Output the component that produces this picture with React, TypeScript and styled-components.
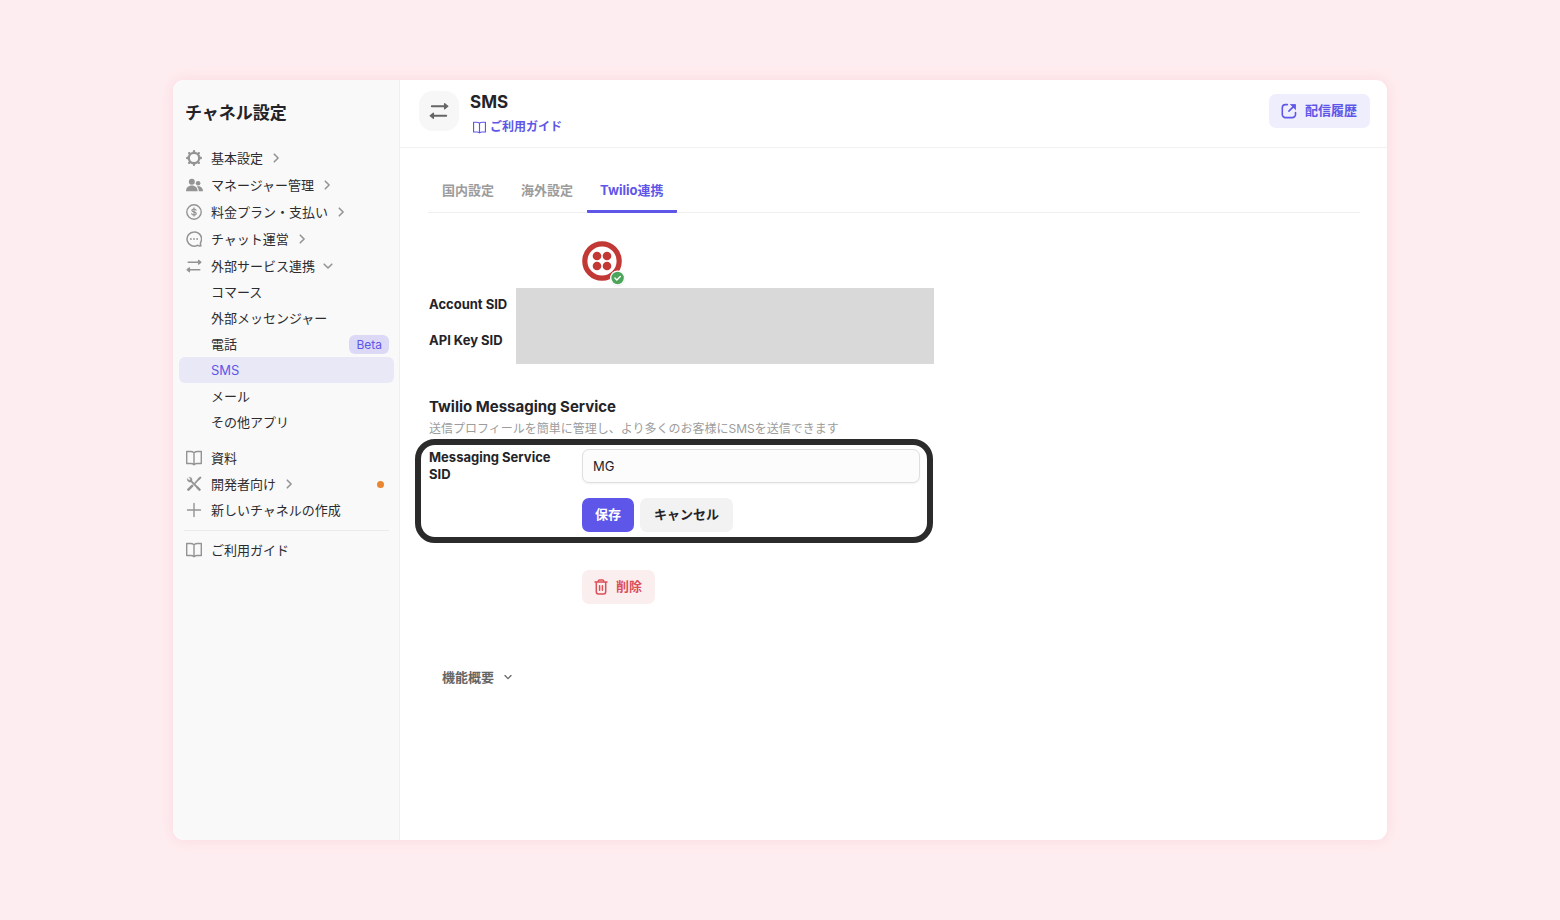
import React from "react";
import styled, { createGlobalStyle } from "styled-components";

const GlobalStyle = createGlobalStyle`
  *, *::before, *::after { box-sizing: border-box; }
  body {
    margin: 0;
    background: #feedf0;
    color: #242428;
    font-family: Inter, "Noto Sans CJK JP", sans-serif;
    font-size: 13px;
    line-height: 17px;
  }
  h1, h2, p, ul { margin: 0; padding: 0; }
  ul { list-style: none; }
  button, input { font: inherit; color: inherit; }
  a { color: inherit; text-decoration: none; }
  svg { display: block; flex: none; }
`;

/* ---------- icons ---------- */

const GearIcon = () => (
  <svg width="16" height="16" viewBox="0 0 16 16" fill="none" stroke="currentColor">
    <circle cx="8" cy="8" r="5.2" strokeWidth="2.3" />
    {[0, 45, 90, 135, 180, 225, 270, 315].map((a) => (
      <path key={a} d="M8 2V1.2" strokeWidth="2.4" strokeLinecap="round" transform={`rotate(${a} 8 8)`} />
    ))}
  </svg>
);

const PeopleIcon = () => (
  <svg width="17" height="16" viewBox="0 0 17 16" fill="currentColor">
    <circle cx="5.8" cy="4.8" r="3" />
    <circle cx="12.1" cy="6.3" r="2.3" />
    <path d="M0 14.3C0 10.8 2.4 8.600 5.800 8.600s5.800 2.200 5.800 5.700z" />
    <path d="M10.900 9.500c3.400-.8 6.100 1.400 6.100 4.800h-4.200c0-2-.7-3.600-1.900-4.800z" />
  </svg>
);

const CoinIcon = () => (
  <svg width="16" height="16" viewBox="0 0 16 16" fill="none" stroke="currentColor" strokeWidth="1.4" strokeLinecap="round">
    <circle cx="8" cy="8" r="7.200" />
    <path d="M10.100 6.200C9.800 5.400 9 5 8 5c-1.200 0-2.100.6-2.100 1.500C5.900 8.600 10.200 7.300 10.200 9.500c0 .9-.9 1.500-2.200 1.500-1.100 0-2-.5-2.300-1.300M8 3.900v8.200" strokeWidth="1.200" />
  </svg>
);

const ChatIcon = () => (
  <svg width="16" height="16" viewBox="0 0 16 16" fill="none" stroke="currentColor" strokeWidth="1.500">
    <path d="M8 .9a7.100 7.100 0 1 0 3.400 13.400c1.100.5 2.300.7 3.500.5-.5-1-.6-2.200-.3-3.300A7.100 7.100 0 0 0 8 .9z" strokeLinejoin="round" />
    <g fill="currentColor" stroke="none">
      <circle cx="4.900" cy="8" r="0.9" />
      <circle cx="8" cy="8" r="0.9" />
      <circle cx="11.100" cy="8" r="0.9" />
    </g>
  </svg>
);

const SwapIcon = ({ size = 16 }: { size?: number }) => (
  <svg width={size} height={size} viewBox="0 0 16 16" fill="none" stroke="currentColor" strokeWidth="1.500" strokeLinecap="round" strokeLinejoin="round">
    <path d="M2.200 4.200h10M13.800 11.800h-10" />
    <path d="M12.500 2.200l2.500 2-2.500 2zM3.500 9.800l-2.500 2 2.500 2z" fill="currentColor" strokeWidth="1.100" />
  </svg>
);

const BookIcon = ({ size = 16 }: { size?: number }) => (
  <svg width={size} height={size} viewBox="0 0 16 16" fill="none" stroke="currentColor" strokeWidth="1.400" strokeLinejoin="round">
    <path d="M8 2.700C7 1.900 6 1.500 4.700 1.500H.7v12h4.200c1.300 0 2.200.4 3.100 1.200.9-.8 1.800-1.200 3.100-1.200h4.200v-12h-4C10 1.500 9 1.900 8 2.700zM8 2.700v12" />
  </svg>
);

const ToolsIcon = () => (
  <svg width="16" height="16" viewBox="0 0 16 16" fill="none" stroke="currentColor" strokeLinecap="round">
    <path d="M4.400 4.400l9 9.100" strokeWidth="1.800" />
    <path d="M1.400 2.600l1.700 1.700 1.300-.1.100-1.300L2.800 1.300c1.600-.5 3.200.5 3.300 2.100.1.900-.1 1.500-.7 2.100s-1.300.8-2.100.6C1.800 5.900.900 4.300 1.400 2.600z" fill="currentColor" strokeWidth=".3" />
    <path d="M9 7.200l3.700-4.100" strokeWidth="1.600" />
    <path d="M12.600 3.300l1.800-1.700" strokeWidth="2" />
    <path d="M2.400 13.700l3.800-3.800" strokeWidth="2.600" />
    <path d="M11.200 11.200l2.400 2.500" strokeWidth="2.300" />
  </svg>
);

const PlusIcon = () => (
  <svg width="16" height="16" viewBox="0 0 16 16" fill="none" stroke="currentColor" strokeWidth="1.400" strokeLinecap="round">
    <path d="M8 1.500v13M1.500 8h13" />
  </svg>
);

const Chevron = ({ down = false, size = 10 }: { down?: boolean; size?: number }) => (
  <svg width={size} height={size} viewBox="0 0 10 10" fill="none" stroke="currentColor" strokeWidth="1.600" strokeLinecap="round" strokeLinejoin="round">
    <path d={down ? "M1.200 3.200L5 7l3.800-3.800" : "M3.300 1.200L7.100 5 3.300 8.800"} />
  </svg>
);

const OpenIcon = () => (
  <svg width="16" height="16" viewBox="0 0 16 16" fill="none" stroke="currentColor" strokeWidth="1.600" strokeLinecap="round" strokeLinejoin="round">
    <path d="M6.400 1.600H4.500A3.200 3.200 0 0 0 1.300 4.800v6.600a3.200 3.200 0 0 0 3.200 3.200h6.800a3.200 3.200 0 0 0 3.200-3.200V9.600M7.900 8.100l5-5" />
    <path d="M9.800 1.500h4.700v4.700z" fill="currentColor" strokeWidth=".8" />
  </svg>
);

const TrashIcon = () => (
  <svg width="14" height="16" viewBox="0 0 14 16" fill="none" stroke="currentColor" strokeWidth="1.500" strokeLinecap="round" strokeLinejoin="round">
    <path d="M1 3.100h12M4.300 3V1.900c0-.6.400-1 1-1h3.400c.6 0 1 .4 1 1V3M2.300 3.300v9.500c0 1.300.8 2.100 2.100 2.100h5.200c1.300 0 2.100-.8 2.100-2.100V3.300M5.600 6.700v4.600M8.400 6.700v4.600" />
  </svg>
);

const TwilioLogo = () => (
  <svg width="44" height="46" viewBox="0 0 44 46" role="img" aria-label="Twilio">
    <circle cx="20" cy="20" r="17.200" fill="#fff" stroke="#c13834" strokeWidth="5.200" />
    <g fill="#c13834">
      <circle cx="15" cy="15" r="4.300" />
      <circle cx="25" cy="15" r="4.300" />
      <circle cx="15" cy="25" r="4.300" />
      <circle cx="25" cy="25" r="4.300" />
    </g>
    <circle cx="35.600" cy="37.500" r="7.700" fill="#e9e9e9" />
    <circle cx="35.600" cy="37" r="7.500" fill="#fff" />
    <circle cx="35.600" cy="37" r="6.200" fill="#4ca55a" />
    <path d="M32.900 37.100l1.900 1.900 3.500-3.600" fill="none" stroke="#fff" strokeWidth="1.400" strokeLinecap="round" strokeLinejoin="round" />
  </svg>
);

/* ---------- frame ---------- */

const Page = styled.div`
  display: flex;
  min-height: 100vh;
  padding: 80px 173px;
`;

const Card = styled.div`
  display: flex;
  flex: 1;
  min-width: 0;
  overflow: hidden;
  background: #fff;
  border-radius: 11px;
  box-shadow: 0 0 14px rgba(235, 110, 125, 0.16);
`;

/* ---------- sidebar ---------- */

const Sidebar = styled.aside`
  flex: none;
  width: 227px;
  padding: 23px 5px 22px 6px;
  background: #f9f9f9;
  border-right: 1px solid #efeff0;
`;

const SidebarTitle = styled.h2`
  padding-left: 6px;
  margin-bottom: 22px;
  font-size: 17px;
  line-height: 20px;
  font-weight: 700;
`;

const NavList = styled.ul<{ $gap?: number }>`
  display: flex;
  flex-direction: column;
  gap: ${(p) => p.$gap ?? 0}px;
`;

const NavSection = styled.div`
  margin-top: 10px;
`;

const Divider = styled.hr`
  height: 1px;
  margin: 7px 5px 6px;
  border: 0;
  background: #ebebec;
`;

const NavLink = styled.a<{ $active?: boolean; $nested?: boolean }>`
  display: flex;
  align-items: center;
  gap: 8px;
  height: 26px;
  padding: 0 5px 0 ${(p) => (p.$nested ? 32 : 7)}px;
  border-radius: 6px;
  background: ${(p) => (p.$active ? "#e9e8f7" : "transparent")};
  color: ${(p) => (p.$active ? "#5e56e8" : "#2c2c30")};
`;

const Muted = styled.span`
  display: flex;
  color: #949494;
`;

const ItemIcon = styled(Muted)`
  width: 17px;
`;

const Beta = styled.span`
  margin-left: auto;
  padding: 0 7px;
  border-radius: 6px;
  background: #dcd9f6;
  color: #5e56e8;
  font-size: 12px;
  line-height: 19px;
`;

const Dot = styled.span`
  width: 7px;
  height: 7px;
  margin: 0 5px 0 auto;
  border-radius: 50%;
  background: #e9862f;
`;

type Item = { label: string; icon: React.ReactNode; arrow?: "right" | "down"; dot?: boolean };

const mainItems: Item[] = [
  { label: "基本設定", icon: <GearIcon />, arrow: "right" },
  { label: "マネージャー管理", icon: <PeopleIcon />, arrow: "right" },
  { label: "料金プラン・支払い", icon: <CoinIcon />, arrow: "right" },
  { label: "チャット運営", icon: <ChatIcon />, arrow: "right" },
  { label: "外部サービス連携", icon: <SwapIcon />, arrow: "down" },
];

const subItems = ["コマース", "外部メッセンジャー", "電話", "SMS", "メール", "その他アプリ"];

const moreItems: Item[] = [
  { label: "資料", icon: <BookIcon /> },
  { label: "開発者向け", icon: <ToolsIcon />, arrow: "right", dot: true },
  { label: "新しいチャネルの作成", icon: <PlusIcon /> },
];

const NavItem = ({ label, icon, arrow, dot }: Item) => (
  <li>
    <NavLink href="#">
      <ItemIcon>{icon}</ItemIcon>
      {label}
      {arrow && (
        <Muted>
          <Chevron down={arrow === "down"} />
        </Muted>
      )}
      {dot && <Dot />}
    </NavLink>
  </li>
);

/* ---------- main ---------- */

const Main = styled.main`
  flex: 1;
  min-width: 0;
`;

const Header = styled.header`
  display: flex;
  gap: 11px;
  padding: 11px 17px 10px 19px;
  border-bottom: 1px solid #f1f1f1;
`;

const ChannelIcon = styled.div`
  display: grid;
  place-items: center;
  width: 40px;
  height: 40px;
  border-radius: 14px;
  background: #f7f7f7;
  color: #666;
`;

const HeaderText = styled.div`
  flex: 1;
  padding-top: 1px;
`;

const HeaderActions = styled.div`
  padding-top: 3px;
`;

const Title = styled.h1`
  margin-bottom: 5px;
  font-size: 17px;
  line-height: 20px;
  font-weight: 700;
`;

const GuideLink = styled.a`
  display: inline-flex;
  align-items: center;
  gap: 4px;
  padding-left: 3px;
  color: #5e56e8;
  font-size: 12px;
  line-height: 20px;
  font-weight: 700;
  vertical-align: top;
`;

const tones = {
  primary: ["#5e56e8", "#fff"],
  neutral: ["#f2f2f2", "#242428"],
  soft: ["#efeefd", "#5e56e8"],
  danger: ["#fbeeef", "#dc4f58"],
};

const Button = styled.button<{ $tone: keyof typeof tones }>`
  display: inline-flex;
  align-items: center;
  gap: 8px;
  height: 34px;
  padding: 0 13px 2px;
  border: 0;
  border-radius: 7px;
  background: ${(p) => tones[p.$tone][0]};
  color: ${(p) => tones[p.$tone][1]};
  font-weight: 700;
  vertical-align: top;
  cursor: pointer;
`;

const CancelButton = styled(Button)`
  padding: 0 14px 2px;
`;

const IconButton = styled(Button)`
  padding: 0 13px 1px 12px;
`;

const Tabs = styled.div`
  display: flex;
  gap: 1px;
  margin: 22px 27px 0 28px;
  padding-left: 1px;
  border-bottom: 1px solid #efeff0;
`;

const Tab = styled.button<{ $active?: boolean }>`
  height: 43px;
  margin-bottom: -1px;
  padding: 0 13px;
  border: 0;
  border-bottom: 3px solid ${(p) => (p.$active ? "#5e56e8" : "transparent")};
  border-radius: 1px;
  background: none;
  color: ${(p) => (p.$active ? "#5e56e8" : "#9c9c9c")};
  font-weight: 700;
`;

const Content = styled.div`
  padding: 28px 27px 28px 29px;
`;

const Indented = styled.div`
  padding-left: 153px;
`;

const Credentials = styled.div`
  display: flex;
  width: 505px;
  max-width: 100%;
  margin-top: 1px;
`;

const KeyNames = styled.div`
  display: flex;
  flex-direction: column;
  gap: 4px;
  width: 87px;
  padding-bottom: 8px;
  line-height: 32px;
  font-weight: 700;
  white-space: nowrap;
`;

const HiddenValues = styled.div`
  flex: 1;
  background: #d9d9d9;
`;

const SectionTitle = styled.h2`
  margin-top: 33px;
  font-size: 15px;
  line-height: 20px;
  font-weight: 700;
`;

const Description = styled.p`
  margin: 4px 0 2px;
  color: #9c9c9c;
  font-size: 12px;
  line-height: 16px;
`;

const Highlight = styled.form`
  display: grid;
  grid-template-columns: 153px 1fr;
  row-gap: 15px;
  width: 518px;
  max-width: 100%;
  margin-left: -14px;
  padding: 4px 7px 5px 8px;
  border: 6px solid #2b2b2c;
  border-radius: 20px;
`;

const FieldLabel = styled.label`
  padding-right: 24px;
  font-weight: 700;
`;

const TextField = styled.input`
  width: 100%;
  height: 34px;
  padding: 0 10px;
  border: 1px solid #dfdfdf;
  border-radius: 7px;
  background: #fcfcfc;
  box-shadow: 0 1px 2px rgba(0, 0, 0, 0.06);
  outline: none;
`;

const Actions = styled.div`
  grid-column: 2;
  display: flex;
  gap: 6px;
`;

const DeleteRow = styled(Indented)`
  margin-top: 27px;
`;

const Summary = styled.button`
  display: flex;
  align-items: center;
  gap: 10px;
  margin-top: 63px;
  padding: 0 13px;
  border: 0;
  background: none;
  color: #656565;
  line-height: 20px;
  font-weight: 700;
`;

export default function App() {
  return (
    <>
      <GlobalStyle />
      <Page>
        <Card>
          <Sidebar>
            <SidebarTitle>チャネル設定</SidebarTitle>
            <nav>
              <NavList $gap={1}>
                {mainItems.map((item) => (
                  <NavItem key={item.label} {...item} />
                ))}
              </NavList>
              <NavList>
                {subItems.map((label) => (
                  <li key={label}>
                    <NavLink href="#" $nested $active={label === "SMS"}>
                      {label}
                      {label === "電話" && <Beta>Beta</Beta>}
                    </NavLink>
                  </li>
                ))}
              </NavList>
              <NavSection>
                <NavList>
                  {moreItems.map((item) => (
                    <NavItem key={item.label} {...item} />
                  ))}
                </NavList>
              </NavSection>
              <Divider />
              <NavList>
                <NavItem label="ご利用ガイド" icon={<BookIcon />} />
              </NavList>
            </nav>
          </Sidebar>
          <Main>
            <Header>
              <ChannelIcon>
                <SwapIcon size={20} />
              </ChannelIcon>
              <HeaderText>
                <Title>SMS</Title>
                <GuideLink href="#">
                  <BookIcon size={13} />
                  ご利用ガイド
                </GuideLink>
              </HeaderText>
              <HeaderActions>
                <IconButton type="button" $tone="soft">
                  <OpenIcon />
                  配信履歴
                </IconButton>
              </HeaderActions>
            </Header>
            <Tabs role="tablist">
              <Tab role="tab">国内設定</Tab>
              <Tab role="tab">海外設定</Tab>
              <Tab role="tab" aria-selected $active>
                Twilio連携
              </Tab>
            </Tabs>
            <Content>
              <Indented>
                <TwilioLogo />
              </Indented>
              <Credentials>
                <KeyNames>
                  <span>Account SID</span>
                  <span>API Key SID</span>
                </KeyNames>
                <HiddenValues />
              </Credentials>
              <SectionTitle>Twilio Messaging Service</SectionTitle>
              <Description>送信プロフィールを簡単に管理し、より多くのお客様にSMSを送信できます</Description>
              <Highlight>
                <FieldLabel htmlFor="service-sid">Messaging Service SID</FieldLabel>
                <TextField id="service-sid" defaultValue="MG" />
                <Actions>
                  <Button type="button" $tone="primary">保存</Button>
                  <CancelButton type="button" $tone="neutral">キャンセル</CancelButton>
                </Actions>
              </Highlight>
              <DeleteRow>
                <IconButton type="button" $tone="danger">
                  <TrashIcon />
                  削除
                </IconButton>
              </DeleteRow>
              <Summary type="button" aria-expanded={false}>
                機能概要
                <Chevron down size={8} />
              </Summary>
            </Content>
          </Main>
        </Card>
      </Page>
    </>
  );
}
